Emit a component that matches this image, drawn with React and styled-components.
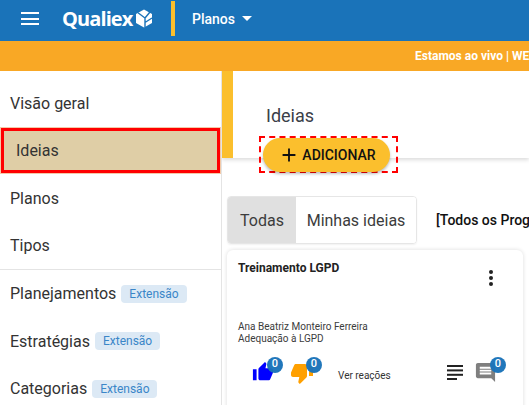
import React from 'react';
import styled, { createGlobalStyle } from 'styled-components';
import { MdThumbUp, MdThumbDown, MdComment, MdAdd } from 'react-icons/md';

const GlobalStyle = createGlobalStyle`
  html, body {
    margin: 0;
    height: 100%;
    overflow: hidden;
    background: #fff;
    font-family: Roboto, "Liberation Sans", sans-serif;
    color: #333;
  }
`;

const Page = styled.div`
  width: 529px;
  height: 405px;
  overflow: hidden;
  display: flex;
  flex-direction: column;
`;

const TopBar = styled.header`
  height: 41px;
  flex: none;
  background: #1a73b9;
  display: flex;
  align-items: center;
  padding-left: 21px;
  color: #fff;
`;

const MenuButton = styled.div`
  width: 18px;
  height: 13px;
  display: flex;
  flex-direction: column;
  justify-content: space-between;
  margin-right: 23px;
  margin-top: -4px;
  span {
    height: 2px;
    background: #fff;
    display: block;
  }
`;

const Logo = styled.div`
  display: flex;
  align-items: center;
  gap: 3px;
  width: 110px;
  margin-top: -4px;
  font-family: "Open Sans", sans-serif;
  font-weight: 700;
  font-size: 20px;
  letter-spacing: -0.9px;
`;

const BarDivider = styled.div`
  width: 4px;
  height: 35px;
  background: #fbbf2d;
  margin: -4px 17px 0 -1px;
`;

const ModuleMenu = styled.div`
  display: flex;
  align-items: center;
  gap: 7px;
  margin-top: -4px;
  font-size: 14px;
  font-weight: 500;
`;

const Caret = styled.span`
  width: 0;
  height: 0;
  border-left: 5px solid transparent;
  border-right: 5px solid transparent;
  border-top: 5px solid #fff;
`;

const Banner = styled.div`
  height: 30px;
  flex: none;
  background: #f9a825;
  color: #fff;
  font-size: 12px;
  font-weight: 700;
  display: flex;
  align-items: center;
  padding-left: 415px;
  white-space: nowrap;
  overflow: hidden;
`;

const Body = styled.div`
  flex: 1;
  display: grid;
  grid-template-columns: 222px 1fr;
  min-height: 0;
`;

const Sidebar = styled.nav`
  border-right: 1px solid #e4e4e4;
  padding-top: 9px;
`;

const NavGroup = styled.div`
  border-bottom: ${p => (p.$divided ? '1px solid #e4e4e4' : 'none')};
`;

const NavItem = styled.div`
  height: 47.4px;
  box-sizing: border-box;
  display: flex;
  align-items: center;
  gap: 5px;
  font-size: 16px;
  color: #333;
  padding-left: ${p => (p.$active ? '15px' : '10px')};
  background: ${p => (p.$active ? '#dfcea6' : 'transparent')};
  border: ${p => (p.$active ? '3px solid #f00' : 'none')};
  ${p => p.$active && `
    height: 45px;
    margin: 1px;
    padding-left: 12px;
    box-shadow: 0 0 0 1px #f3c9a8;
  `}
`;

const ExtensionTag = styled.span`
  background: #dce9f5;
  color: #3a86c8;
  font-size: 12px;
  line-height: 18px;
  padding: 0 8px;
  border-radius: 4px;
`;

const Content = styled.main`
  min-width: 0;
  overflow: hidden;
`;

const PageHead = styled.div`
  height: 87px;
  box-sizing: border-box;
  background: #fff;
  border-left: 11px solid #fbbf2d;
  box-shadow: 0 2px 4px rgba(0, 0, 0, 0.14);
  padding: 33px 0 0 33px;
`;

const PageTitle = styled.h1`
  margin: 0 0 8px;
  font-size: 18px;
  font-weight: 400;
  line-height: 24px;
  color: #3a4048;
`;

const ActionFrame = styled.div`
  width: 139px;
  height: 37px;
  box-sizing: border-box;
  margin-left: -7px;
  border: 2px dashed #f00;
  padding: 0 6px 0 2px;
  display: flex;
  align-items: center;
  position: relative;
`;

const AddButton = styled.button`
  width: 100%;
  height: 34px;
  border: none;
  border-radius: 17px;
  background: #fbbf2d;
  color: #111;
  font-family: Roboto, sans-serif;
  font-size: 14px;
  font-weight: 500;
  display: flex;
  align-items: center;
  justify-content: center;
  gap: 2px;
  padding: 0 0 0 1px;
  box-shadow: 0 2px 3px rgba(0, 0, 0, 0.25);
  svg {
    width: 22px;
    height: 22px;
  }
`;

const FilterRow = styled.div`
  display: flex;
  align-items: center;
  padding: 38px 0 0 5px;
`;

const Tabs = styled.div`
  display: flex;
  height: 48px;
  width: 190px;
  box-sizing: border-box;
  border: 1px solid #e6e6e6;
  border-radius: 4px;
  overflow: hidden;
  flex: none;
  box-shadow: 0 1px 2px rgba(0, 0, 0, 0.06);
`;

const Tab = styled.div`
  display: flex;
  align-items: center;
  justify-content: center;
  font-size: 16px;
  color: #3c3c3c;
  background: ${p => (p.$selected ? '#e0e0e0' : '#fff')};
  flex: ${p => (p.$selected ? '0 0 68px' : '1')};
`;

const ProgramFilter = styled.div`
  margin-left: 19px;
  font-size: 14px;
  font-weight: 500;
  color: #111;
  white-space: nowrap;
`;

const Card = styled.article`
  margin: 6px 6px 0 5px;
  height: 170px;
  box-sizing: border-box;
  border-radius: 6px;
  background: #fff;
  box-shadow: 0 0 4px rgba(0, 0, 0, 0.14);
  padding: 11px 11px 0 11px;
`;

const CardHead = styled.div`
  display: flex;
  justify-content: space-between;
  height: 60px;
`;

const CardTitle = styled.h2`
  margin: 0;
  font-size: 12px;
  font-weight: 700;
  line-height: 15px;
  color: #222;
`;

const Kebab = styled.div`
  display: flex;
  flex-direction: column;
  gap: 2px;
  margin: 9px 19px 0 0;
  span {
    width: 4px;
    height: 4px;
    background: #222;
    border-radius: 50%;
  }
`;

const Meta = styled.div`
  font-size: 10px;
  line-height: 12px;
  color: #3c3c3c;
`;

const Reactions = styled.div`
  display: flex;
  align-items: center;
  height: 30px;
  margin-top: 12px;
  padding-left: 14px;
`;

const IconSlot = styled.div`
  position: relative;
  width: ${p => p.$width}px;
  height: 22px;
  flex: none;
  svg {
    display: block;
  }
`;

const LinesSlot = styled(IconSlot)`
  padding-top: 5px;
`;

const CountBadge = styled.span`
  position: absolute;
  left: ${p => p.$left}px;
  top: -4px;
  width: 16px;
  height: 16px;
  border-radius: 50%;
  background: rgba(26, 115, 185, 0.97);
  color: #fff;
  font-size: 11px;
  font-weight: 500;
  line-height: 14px;
  text-align: center;
`;

const SeeReactions = styled.span`
  font-size: 10px;
  color: #333;
  margin: 0 56px 0 7px;
  padding-top: 6px;
  white-space: nowrap;
`;

function QualiexMark() {
  return (
    <svg width="18" height="19" viewBox="0 0 18 19">
      <path d="M9 .5 17 5v9l-8 4.5L1 14V5Z" fill="#fff" />
      <path d="M3 3.8 10 9v9.5M10 9l5-6M10 13.5l7-4.5" stroke="#1a73b9" strokeWidth="1.4" fill="none" />
    </svg>
  );
}

function LinesIcon() {
  return (
    <svg width="16" height="16" viewBox="0 0 16 16">
      <rect x="0" y="1" width="16" height="2" fill="#222" />
      <rect x="0" y="5.4" width="16" height="2" fill="#222" />
      <rect x="0" y="9.8" width="16" height="2" fill="#222" />
      <rect x="0" y="14" width="10" height="2" fill="#222" />
    </svg>
  );
}

export default function App() {
  return (
    <Page>
      <GlobalStyle />
      <TopBar>
        <MenuButton><span /><span /><span /></MenuButton>
        <Logo>Qualiex <QualiexMark /></Logo>
        <BarDivider />
        <ModuleMenu>Planos <Caret /></ModuleMenu>
      </TopBar>
      <Banner>Estamos ao vivo | WEBINAR</Banner>
      <Body>
        <Sidebar>
          <NavGroup $divided>
            <NavItem>Visão geral</NavItem>
            <NavItem $active>Ideias</NavItem>
            <NavItem>Planos</NavItem>
            <NavItem>Tipos</NavItem>
          </NavGroup>
          <NavItem>Planejamentos <ExtensionTag>Extensão</ExtensionTag></NavItem>
          <NavItem>Estratégias <ExtensionTag>Extensão</ExtensionTag></NavItem>
          <NavItem>Categorias <ExtensionTag>Extensão</ExtensionTag></NavItem>
        </Sidebar>
        <Content>
          <PageHead>
            <PageTitle>Ideias</PageTitle>
            <ActionFrame>
              <AddButton><MdAdd /> ADICIONAR</AddButton>
            </ActionFrame>
          </PageHead>
          <FilterRow>
            <Tabs>
              <Tab $selected>Todas</Tab>
              <Tab>Minhas ideias</Tab>
            </Tabs>
            <ProgramFilter>[Todos os Programas]</ProgramFilter>
          </FilterRow>
          <Card>
            <CardHead>
              <CardTitle>Treinamento LGPD</CardTitle>
              <Kebab><span /><span /><span /></Kebab>
            </CardHead>
            <Meta>Ana Beatriz Monteiro Ferreira</Meta>
            <Meta>Adequação à LGPD</Meta>
            <Reactions>
              <IconSlot $width={38}>
                <MdThumbUp size={22} color="#0000ff" />
                <CountBadge $left={15}>0</CountBadge>
              </IconSlot>
              <IconSlot $width={41}>
                <MdThumbDown size={24} color="#ffa000" />
                <CountBadge $left={16}>0</CountBadge>
              </IconSlot>
              <SeeReactions>Ver reações</SeeReactions>
              <LinesSlot $width={27}><LinesIcon /></LinesSlot>
              <IconSlot $width={24}>
                <MdComment size={23} color="#7f7f7f" />
                <CountBadge $left={16}>0</CountBadge>
              </IconSlot>
            </Reactions>
          </Card>
        </Content>
      </Body>
    </Page>
  );
}
